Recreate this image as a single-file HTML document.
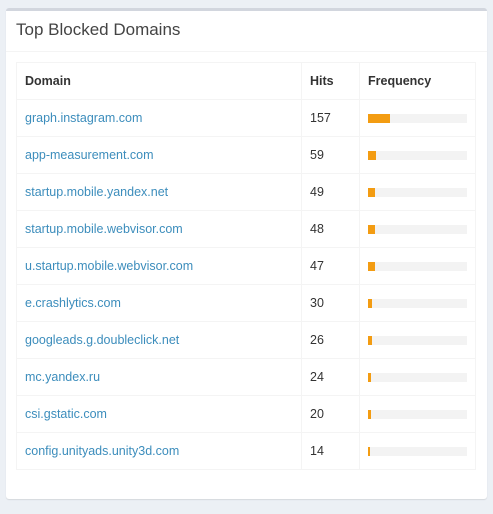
<!DOCTYPE html>
<html><head><style>
body{margin:0;background:#ecf0f5;width:493px;height:514px;font-family:"Liberation Sans",sans-serif;}
.box{position:absolute;left:6px;top:8px;width:481px;height:491px;background:#fff;border-top:3px solid #d2d6de;border-radius:3px;box-shadow:0 1px 1px rgba(0,0,0,.1);box-sizing:border-box;}
.hd{height:41px;border-bottom:1px solid #f4f4f4;box-sizing:border-box;padding:9px 10px;font-size:17px;color:#444;}
table{position:absolute;left:10px;top:51px;width:460px;border-collapse:collapse;font-size:12.5px;color:#333;}
td,th{border:1px solid #f4f4f4;height:36px;padding:0 8px;text-align:left;}
th{height:36px;font-weight:bold;}
td a{color:#3c8dbc;text-decoration:none;}
.bar{width:99px;height:9px;background:#f3f3f3;}
.bar div{height:9px;background:#f39c12;}
</style></head><body>
<div class="box"><div class="hd">Top Blocked Domains</div>
<table>
<tr><th style="width:268px">Domain</th><th style="width:41px">Hits</th><th>Frequency</th></tr>
<tr><td><a>graph.instagram.com</a></td><td>157</td><td><div class="bar"><div style="width:22px"></div></div></td></tr>
<tr><td><a>app-measurement.com</a></td><td>59</td><td><div class="bar"><div style="width:8px"></div></div></td></tr>
<tr><td><a>startup.mobile.yandex.net</a></td><td>49</td><td><div class="bar"><div style="width:7px"></div></div></td></tr>
<tr><td><a>startup.mobile.webvisor.com</a></td><td>48</td><td><div class="bar"><div style="width:7px"></div></div></td></tr>
<tr><td><a>u.startup.mobile.webvisor.com</a></td><td>47</td><td><div class="bar"><div style="width:7px"></div></div></td></tr>
<tr><td><a>e.crashlytics.com</a></td><td>30</td><td><div class="bar"><div style="width:4px"></div></div></td></tr>
<tr><td><a>googleads.g.doubleclick.net</a></td><td>26</td><td><div class="bar"><div style="width:4px"></div></div></td></tr>
<tr><td><a>mc.yandex.ru</a></td><td>24</td><td><div class="bar"><div style="width:3px"></div></div></td></tr>
<tr><td><a>csi.gstatic.com</a></td><td>20</td><td><div class="bar"><div style="width:3px"></div></div></td></tr>
<tr><td><a>config.unityads.unity3d.com</a></td><td>14</td><td><div class="bar"><div style="width:2px"></div></div></td></tr>
</table></div>
</body></html>
